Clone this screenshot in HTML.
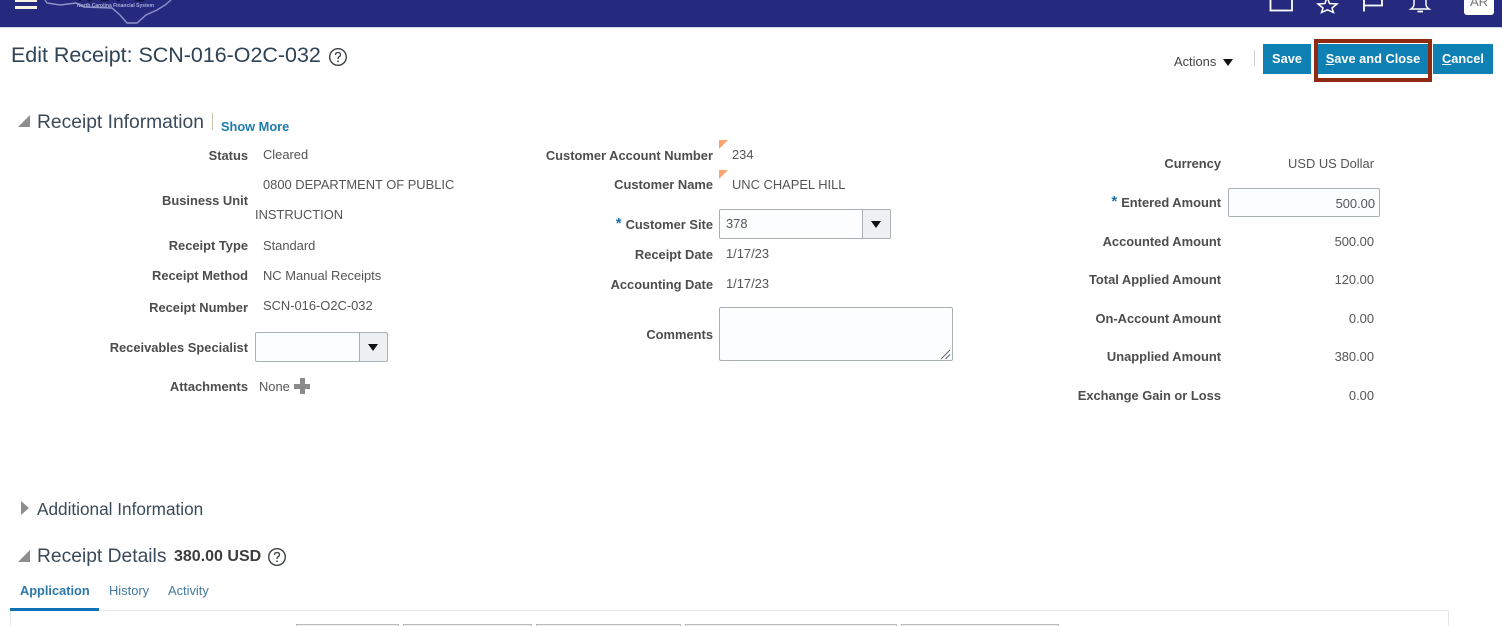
<!DOCTYPE html>
<html lang="en">
<head>
<meta charset="utf-8">
<title>Edit Receipt</title>
<style>
html,body{margin:0;padding:0;background:#fff;width:1502px;height:626px;overflow:hidden}
#p{position:relative;width:1502px;height:626px;overflow:hidden;font-family:"Liberation Sans",sans-serif;color:#4a4a4a;background:#fff}
.a{position:absolute;white-space:nowrap}
.t{position:absolute;white-space:nowrap;font-size:12.9px;line-height:16px;color:#555}
.l{position:absolute;white-space:nowrap;font-size:12.9px;line-height:16px;font-weight:bold;color:#4d4d4d;text-align:right}
.h{position:absolute;white-space:nowrap;font-size:19.25px;line-height:24px;color:#3b4a58}
.in{position:absolute;box-sizing:border-box;background:#fbfdfe;border:1px solid #a9b0b5;border-radius:2px}
.dd{position:absolute;box-sizing:border-box;background:#eef0f1;border:1px solid #a9b0b5;border-radius:0 2px 2px 0}
.dd:after{content:"";position:absolute;left:8px;top:11px;border-left:5px solid transparent;border-right:5px solid transparent;border-top:7px solid #111}
.btn{position:absolute;box-sizing:border-box;background:#0f80b4;color:#fff;font-size:12.8px;font-weight:bold;line-height:30px;text-align:center;white-space:nowrap}
.req{color:#1d6fa5;font-size:15px;font-weight:bold;margin-right:4px;position:relative;top:-1px}
.flag{position:absolute;width:0;height:0;border-top:9px solid #f9a66c;border-right:9px solid transparent}
.box{position:absolute;top:624px;height:4px;box-sizing:border-box;border:1px solid #b4bac0;background:#f1f3f5}
</style>
</head>
<body>
<div id="p">
<div class="a" style="left:0;top:0;width:1502px;height:27px;background:#262a7f"></div>
<div class="a" style="left:0;top:27px;width:1502px;height:1px;background:#cfd6ea"></div>

<div class="a" style="left:15px;top:0;width:22px;height:1.500px;background:#f7f1df"></div>
<div class="a" style="left:15px;top:6px;width:22px;height:2.500px;background:#f7f1df"></div>

<svg class="a" style="left:0;top:0" width="190" height="27" viewBox="0 0 190 27">
<path d="M45 0 L47 3 L60 5 L76 3 L84 7 L112 8 L120 15 L127 23 L137 23 L146 15 L157 10 L165 5 L171 0" fill="none" stroke="#8f93c6" stroke-width="1.400"/>
<text x="77" y="7" font-family="Liberation Sans, sans-serif" font-size="5" font-weight="bold" fill="#a9acd6">North Carolina Financial System</text>
<text x="77" y="1.500" font-family="Liberation Sans, sans-serif" font-size="22" font-weight="bold" fill="#15153f" textLength="70">NCFS</text>
</svg>

<svg class="a" style="left:1265px;top:0" width="170" height="14" viewBox="0 0 170 14">
<g fill="none" stroke="#fff" stroke-width="1.800">
<path d="M5.500 -2 V10.500 H27 V-2"/>
<path d="M62 -3 L64.500 3.500 L72 4 L67 8 L68.500 12.500 L62.500 9.800 L56.500 12.500 L58 8 L53 4 L60 3.500 Z" stroke-width="1.500"/>
<path d="M99 -2 V11.500 M99 5.500 H117 V-2"/>
<path d="M149 -2 V4 Q149 7 146 9 H164 Q161 7 161 4 V-2" stroke-width="1.500"/>
<path d="M152.500 11.500 H158"/>
</g>
</svg>
<div class="a" style="left:1464px;top:-6px;width:30px;height:21px;background:#fff;border-radius:3px;color:#777;font-size:13px;line-height:16px;text-align:center">AR</div>

<div class="a" style="left:11px;top:41px;font-size:21.450px;line-height:28px;color:#2f4356">Edit Receipt: SCN-016-O2C-032</div>
<svg class="a" style="left:328px;top:47px" width="20" height="20" viewBox="0 0 20 20">
<circle cx="10" cy="10" r="8.300" fill="none" stroke="#3a3f46" stroke-width="1.400"/>
<path d="M7.500 8 Q7.500 5.500 10 5.500 Q12.500 5.500 12.500 7.700 Q12.500 9 11 9.800 Q10 10.400 10 12" fill="none" stroke="#3a3f46" stroke-width="1.300"/>
<circle cx="10" cy="14.300" r="0.900" fill="#3a3f46"/>
</svg>

<div class="a" style="left:1174px;top:54px;font-size:12.9px;line-height:16px;color:#444">Actions</div>
<div class="a" style="left:1223px;top:59px;border-left:5px solid transparent;border-right:5px solid transparent;border-top:7px solid #111"></div>
<div class="a" style="left:1254px;top:50px;width:1px;height:16px;background:#cfcfcf"></div>
<div class="btn" style="left:1263px;top:44px;width:48px;height:30px">Save</div>
<div class="btn" style="left:1433px;top:44px;width:60px;height:30px"><u>C</u>ancel</div>
<div class="a" style="left:1314px;top:39px;width:118px;height:43px;box-sizing:border-box;border:4px solid #8f2a12;background:#fff"></div>
<div class="btn" style="left:1318px;top:44px;width:110px;height:30px"><u>S</u>ave and Close</div>

<div class="a" style="left:18px;top:115px;border-left:12px solid transparent;border-bottom:12px solid #8e8e8e"></div>
<div class="h" style="left:37px;top:111px">Receipt Information</div>
<div class="a" style="left:212px;top:113px;width:1px;height:17px;background:#c9c3b4"></div>
<div class="a" style="left:221px;top:119px;font-size:12.8px;line-height:16px;font-weight:bold;color:#1d7bab">Show More</div>

<div class="l" style="right:1254px;top:148px">Status</div>
<div class="t" style="left:263px;top:147px">Cleared</div>
<div class="l" style="right:1254px;top:193px">Business Unit</div>
<div class="t" style="left:263px;top:177px">0800 DEPARTMENT OF PUBLIC</div>
<div class="t" style="left:255px;top:207px">INSTRUCTION</div>
<div class="l" style="right:1254px;top:238px">Receipt Type</div>
<div class="t" style="left:263px;top:238px">Standard</div>
<div class="l" style="right:1254px;top:268px">Receipt Method</div>
<div class="t" style="left:263px;top:268px">NC Manual Receipts</div>
<div class="l" style="right:1254px;top:300px">Receipt Number</div>
<div class="t" style="left:263px;top:298px">SCN-016-O2C-032</div>
<div class="l" style="right:1254px;top:340px">Receivables Specialist</div>
<div class="in" style="left:255px;top:332px;width:105px;height:30px"></div>
<div class="dd" style="left:359px;top:332px;width:29px;height:30px"></div>
<div class="l" style="right:1254px;top:379px">Attachments</div>
<div class="t" style="left:259px;top:379px">None</div>
<div class="a" style="left:294px;top:383.500px;width:16px;height:5px;background:#8b8b8b"></div>
<div class="a" style="left:299.500px;top:378px;width:5px;height:15.500px;background:#8b8b8b"></div>

<div class="l" style="right:789px;top:148px">Customer Account Number</div>
<div class="flag" style="left:719px;top:140px"></div>
<div class="t" style="left:732px;top:147px">234</div>
<div class="l" style="right:789px;top:177px">Customer Name</div>
<div class="flag" style="left:719px;top:170px"></div>
<div class="t" style="left:732px;top:177px">UNC CHAPEL HILL</div>
<div class="l" style="right:789px;top:217px"><span class="req">*</span>Customer Site</div>
<div class="in" style="left:719px;top:209px;width:144px;height:30px;font-size:12.9px;line-height:28px;padding-left:6px;color:#555">378</div>
<div class="dd" style="left:862px;top:209px;width:29px;height:30px"></div>
<div class="l" style="right:789px;top:247px">Receipt Date</div>
<div class="t" style="left:726px;top:246px">1/17/23</div>
<div class="l" style="right:789px;top:277px">Accounting Date</div>
<div class="t" style="left:726px;top:276px">1/17/23</div>
<div class="l" style="right:789px;top:327px">Comments</div>
<div class="in" style="left:719px;top:307px;width:234px;height:54px"></div>
<svg class="a" style="left:940px;top:349px" width="11" height="11" viewBox="0 0 11 11"><path d="M1 10 L10 1 M5.500 10 L10 5.500" stroke="#666" stroke-width="1" fill="none"/></svg>

<div class="l" style="right:281px;top:156px">Currency</div>
<div class="t" style="right:128px;top:156px">USD US Dollar</div>
<div class="l" style="right:281px;top:195px"><span class="req">*</span>Entered Amount</div>
<div class="in" style="left:1228px;top:188px;width:152px;height:29px;font-size:12.9px;line-height:29px;text-align:right;padding-right:4px;color:#555">500.00</div>
<div class="l" style="right:281px;top:234px">Accounted Amount</div>
<div class="t" style="right:128px;top:234px">500.00</div>
<div class="l" style="right:281px;top:272px">Total Applied Amount</div>
<div class="t" style="right:128px;top:272px">120.00</div>
<div class="l" style="right:281px;top:311px">On-Account Amount</div>
<div class="t" style="right:128px;top:311px">0.00</div>
<div class="l" style="right:281px;top:349px">Unapplied Amount</div>
<div class="t" style="right:128px;top:349px">380.00</div>
<div class="l" style="right:281px;top:388px">Exchange Gain or Loss</div>
<div class="t" style="right:128px;top:388px">0.00</div>

<div class="a" style="left:21px;top:501px;border-top:7px solid transparent;border-bottom:7px solid transparent;border-left:8px solid #8e8e8e"></div>
<div class="a" style="left:37px;top:498px;font-size:17.200px;line-height:23px;color:#3b4a58">Additional Information</div>

<div class="a" style="left:18px;top:550px;border-left:12px solid transparent;border-bottom:12px solid #8e8e8e"></div>
<div class="h" style="left:37px;top:545px">Receipt Details</div>
<div class="a" style="left:174px;top:547px;font-size:16px;line-height:20px;font-weight:bold;color:#3d3d3d">380.00 USD</div>
<svg class="a" style="left:267px;top:547px" width="20" height="20" viewBox="0 0 20 20">
<circle cx="10" cy="10" r="8.300" fill="none" stroke="#3a3f46" stroke-width="1.400"/>
<path d="M7.500 8 Q7.500 5.500 10 5.500 Q12.500 5.500 12.500 7.700 Q12.500 9 11 9.800 Q10 10.400 10 12" fill="none" stroke="#3a3f46" stroke-width="1.300"/>
<circle cx="10" cy="14.300" r="0.900" fill="#3a3f46"/>
</svg>

<div class="a" style="left:20px;top:583px;font-size:12.8px;line-height:16px;font-weight:bold;color:#2b78a8">Application</div>
<div class="a" style="left:109px;top:583px;font-size:12.9px;line-height:16px;color:#43799f">History</div>
<div class="a" style="left:168px;top:583px;font-size:12.9px;line-height:16px;color:#43799f">Activity</div>

<div class="a" style="left:10px;top:610px;width:1439px;height:20px;box-sizing:border-box;border:1px solid #e4e6e8;border-radius:2px"></div>
<div class="a" style="left:10px;top:608px;width:89px;height:3px;background:#0f72b8"></div>

<div class="box" style="left:296px;width:103px"></div>
<div class="box" style="left:403px;width:129px"></div>
<div class="box" style="left:536px;width:145px"></div>
<div class="box" style="left:685px;width:212px"></div>
<div class="box" style="left:901px;width:158px"></div>
</div>
</body>
</html>
